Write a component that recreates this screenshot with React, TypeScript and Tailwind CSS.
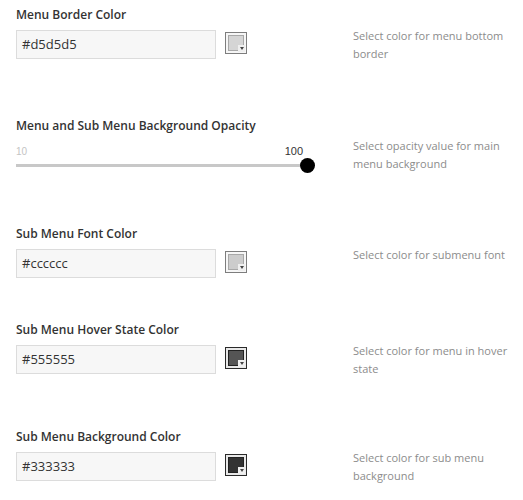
import React from "react";

const font = { fontFamily: '"Open Sans", "Liberation Sans", sans-serif' };

type SwatchProps = { color: string; dark?: boolean };

const Swatch = ({ color, dark }: SwatchProps) => (
  <span
    className={`relative mt-[2px] ml-[9px] block h-[22px] w-[22px] border p-[2px] ${
      dark ? "border-[#2a2a2a] bg-[#e8e8e8]" : "border-[#7d7d7d] bg-[#f6f6f6]"
    }`}
  >
    <span
      className={`block h-full w-full border ${dark ? "border-[#222]" : "border-[#a8a8a8]"}`}
      style={{ background: color }}
    />
    <span className="absolute right-[1px] bottom-[1px] flex h-[7px] w-[7px] items-center justify-center bg-[#efefef]">
      <span className="block h-0 w-0 border-x-[2px] border-t-[3px] border-x-transparent border-t-[#444]" />
    </span>
  </span>
);

type ColorRowProps = {
  label: string;
  value: string;
  swatch: string;
  dark?: boolean;
  desc: string;
  height: string;
};

const ColorRow = ({ label, value, swatch, dark, desc, height }: ColorRowProps) => (
  <div className={`flex ${height}`}>
    <div className="w-[353px] pl-4">
      <div className="text-[12px] leading-[18px] font-semibold text-[#333]">{label}</div>
      <div className="mt-[6px] flex items-start">
        <div className="flex h-[29px] w-[200px] items-center border border-[#dcdcdc] bg-[#f7f7f7] px-[5px] text-[13px] text-[#333]">
          {value}
        </div>
        <Swatch color={swatch} dark={dark} />
      </div>
    </div>
    <p className="w-[160px] pt-[21px] text-[11px] leading-[18px] text-[#8c8c8c]">{desc}</p>
  </div>
);

export default function App() {
  return (
    <div className="min-h-[500px] w-[523px] bg-white pt-[6px]" style={font}>
      <ColorRow
        label="Menu Border Color"
        value="#d5d5d5"
        swatch="#d5d5d5"
        desc="Select color for menu bottom border"
        height="h-[111px]"
      />

      <div className="flex h-[108px]">
        <div className="w-[353px] pl-4">
          <div className="text-[12px] leading-[18px] font-semibold text-[#333]">
            Menu and Sub Menu Background Opacity
          </div>
          <div className="w-[291px]">
            <div
              className="mt-[10px] flex h-[13px] items-end justify-between pr-[4px] leading-[13px]"
              style={{ fontFamily: '"Liberation Sans", Arial, sans-serif' }}
            >
              <span className="text-[10px] text-[#c4c4c4]">10</span>
              <span className="text-[11px] text-[#333]">100</span>
            </div>
            <div className="relative flex h-[15px] items-center">
              <div className="h-[3px] w-full bg-[#c8c8c8]" />
              <span className="absolute top-0 right-[-8px] h-[15px] w-[15px] rounded-full bg-black" />
            </div>
          </div>
        </div>
        <p className="w-[160px] pt-[20px] text-[11px] leading-[18px] text-[#8c8c8c]">
          Select opacity value for main menu background
        </p>
      </div>

      <ColorRow
        label="Sub Menu Font Color"
        value="#cccccc"
        swatch="#cccccc"
        desc="Select color for submenu font"
        height="h-[96px]"
      />
      <ColorRow
        label="Sub Menu Hover State Color"
        value="#555555"
        swatch="#555555"
        dark
        desc="Select color for menu in hover state"
        height="h-[107px]"
      />
      <ColorRow
        label="Sub Menu Background Color"
        value="#333333"
        swatch="#333333"
        dark
        desc="Select color for sub menu background"
        height="h-[72px]"
      />
    </div>
  );
}
